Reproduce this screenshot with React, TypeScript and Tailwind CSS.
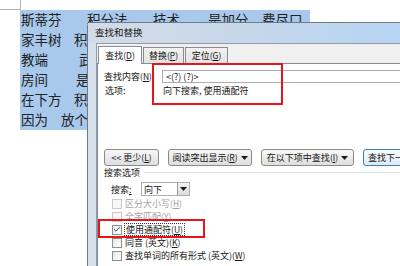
import { Check } from 'lucide-react';

const docRows = [
  [['斯蒂芬', 'w-[66px]'], ['积分法', 'w-[66px]'], ['技术', 'w-[55px]'], ['是加分', 'w-[54px]'], ['费尽口', '']],
  [['家丰树', 'w-[53px]'], ['积分', '']],
  [['教端', 'w-[58px]'], ['武', '']],
  [['房间', 'w-[55px]'], ['是', '']],
  [['在下方', 'w-[53px]'], ['积分', '']],
  [['因为', 'w-[40px]'], ['放个', '']],
];

function Caret() {
  return (
    <svg width="7" height="4" viewBox="0 0 7 4" className="shrink-0">
      <path d="M0 0h7L3.5 4z" fill="#1a1a1a" />
    </svg>
  );
}

function Key({ k }: { k: string }) {
  return (
    <span className="text-[8.5px]">
      (<span className="underline">{k}</span>)
    </span>
  );
}

function Btn({ children, w, focus }: { children: React.ReactNode; w: string; focus?: boolean }) {
  return (
    <div
      className={`${w} h-[17px] shrink-0 rounded-[3px] border flex items-center justify-center gap-[3px] ${
        focus
          ? 'border-[#3c7fb1] bg-gradient-to-b from-[#f7fbfe] to-[#dcebf7]'
          : 'border-[#8a8a8a] bg-gradient-to-b from-[#f8f8f8] to-[#dedede]'
      }`}
    >
      {children}
    </div>
  );
}

function Box({ checked, disabled }: { checked?: boolean; disabled?: boolean }) {
  return (
    <div
      className={`w-[10px] h-[10px] border flex items-center justify-center ${
        disabled ? 'border-[#c9c9c9] bg-[#f7f7f7]' : 'border-[#8e8f8f] bg-gradient-to-br from-[#e6e6e6] to-white'
      }`}
    >
      {checked && <Check className="w-[9px] h-[9px] text-[#2a4a7a]" strokeWidth={3} />}
    </div>
  );
}

export default function App() {
  return (
    <div className="relative w-[400px] h-[266px] overflow-hidden bg-white font-['Noto_Sans_CJK_SC',sans-serif] text-[#151515]">
      {/* document */}
      <div className="h-[10px] w-[21px] border-b border-r border-[#b4b4b4]" />
      <div className="ml-[20px] w-[290px] bg-[#a8c9ec]">
        {docRows.map((row, i) => (
          <div key={i} className="h-[20px] flex items-center pl-[1px] text-[13.5px] leading-none text-[#222]">
            {row.map(([t, w], j) => (
              <span key={j} className={`${w} shrink-0`}>
                {t}
              </span>
            ))}
          </div>
        ))}
      </div>

      {/* dialog window */}
      <div className="absolute left-[87px] top-[22px] w-[330px] h-[260px] border border-[#6f7b87] rounded-tl-[4px] bg-[#d6e1ec] flex flex-col">
        <div className="h-[20px] shrink-0 flex items-center pl-[7px] text-[9.5px] leading-none bg-gradient-to-r from-[#d3dce6] via-[#c6d7ea] to-[#b4d4f5]">
          查找和替换
        </div>
        <div className="flex-1 ml-[8px] border-l border-t border-[#8e9cab] bg-[#f0f0f0] flex flex-col text-[9px] leading-none">
          {/* tabs */}
          <div className="h-[19px] shrink-0 flex items-end pl-[1px]">
            <div className="w-[44px] h-[18px] -mb-px bg-white border border-b-0 border-[#898c95] flex items-center justify-center z-10">
              查找<Key k="D" />
            </div>
            <div className="ml-[1px] w-[41px] h-[16px] bg-gradient-to-b from-[#f2f2f2] to-[#e3e3e3] border border-b-0 border-[#898c95] flex items-center justify-center">
              替换<Key k="P" />
            </div>
            <div className="ml-[1px] w-[43px] h-[16px] bg-gradient-to-b from-[#f2f2f2] to-[#e3e3e3] border border-b-0 border-[#898c95] flex items-center justify-center">
              定位<Key k="G" />
            </div>
          </div>

          {/* tab page */}
          <div className="flex-1 bg-white border-t border-l border-[#898c95] pt-[6px] flex flex-col">
            <div className="h-[13px] flex items-center">
              <span className="pl-[6px] w-[64px] shrink-0">
                查找内容<Key k="N" />:
              </span>
              <div className="flex-1 h-[13px] border border-[#abadb3] flex items-center pl-[3px] text-[9px]">
                &lt;(?) (?)&gt;
              </div>
            </div>
            <div className="mt-[1px] h-[12px] flex items-center">
              <span className="pl-[7px] w-[65px] shrink-0">选项:</span>
              <span>向下搜索, 使用通配符</span>
            </div>

            <div className="mt-[53px] flex pl-[6px] gap-[9px]">
              <Btn w="w-[55px]">
                <span>
                  &lt;&lt; 更少<Key k="L" />
                </span>
              </Btn>
              <Btn w="w-[84px]">
                <span>
                  阅读突出显示<Key k="R" />
                </span>
                <Caret />
              </Btn>
              <Btn w="w-[93px]">
                <span>
                  在以下项中查找<Key k="I" />
                </span>
                <Caret />
              </Btn>
              <Btn w="w-[66px]" focus>
                <span>查找下一处(F)</span>
              </Btn>
            </div>

            <div className="mt-[1px] h-[10px] flex items-center pl-[6px] gap-[4px]">
              <span>搜索选项</span>
              <div className="flex-1 h-px bg-[#dbe3e9]" />
            </div>

            <div className="mt-[5px] h-[14px] flex items-center pl-[13px]">
              <span className="w-[30px] shrink-0">
                搜索<span className="underline">:</span>
              </span>
              <div className="w-[49px] h-[14px] border border-[#abadb3] flex items-center">
                <span className="flex-1 pl-[2px]">向下</span>
                <div className="w-[12px] h-[12px] border-l border-[#9a9a9a] bg-gradient-to-b from-[#f4f4f4] to-[#dcdcdc] flex items-center justify-center">
                  <Caret />
                </div>
              </div>
            </div>

            <div className="mt-[1px] flex flex-col pl-[14px]">
              <div className="h-[13px] flex items-center gap-[3px] text-[#a3a3a3]">
                <Box disabled />
                <span>
                  区分大小写<Key k="H" />
                </span>
              </div>
              <div className="h-[13px] flex items-center gap-[3px] text-[#a3a3a3]">
                <Box disabled />
                <span>
                  全字匹配<Key k="Y" />
                </span>
              </div>
              <div className="h-[13px] flex items-center gap-[2px]">
                <Box checked />
                <span className="border border-dotted border-[#333] px-[1px] py-[1px]">
                  使用通配符<Key k="U" />
                </span>
              </div>
              <div className="h-[13px] flex items-center gap-[3px]">
                <Box />
                <span>
                  同音 (英文)<Key k="K" />
                </span>
              </div>
              <div className="h-[13px] flex items-center gap-[3px]">
                <Box />
                <span>
                  查找单词的所有形式 (英文)<Key k="W" />
                </span>
              </div>
            </div>
          </div>
        </div>
      </div>

      {/* red annotation boxes */}
      <div className="absolute left-[152px] top-[63px] w-[131px] h-[42px] border-2 border-[#e8141c]" />
      <div className="absolute left-[98px] top-[219px] w-[107px] h-[19px] border-2 border-[#e8141c]" />
    </div>
  );
}
